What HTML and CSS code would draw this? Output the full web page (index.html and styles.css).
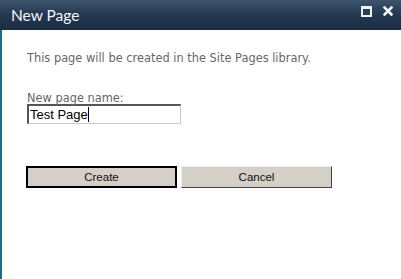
FILE: index.html
```html
<!DOCTYPE html>
<html lang="en">
<head>
    <meta charset="UTF-8">
    <title>New Page</title>
    <link rel="stylesheet" href="styles.css">
</head>
<body>
    <div class="dialog">
        <div class="dialog-title">
            <span class="title-text">New Page</span>
            <div class="title-icons">
                <span class="icon-max"></span>
                <svg class="icon-close" width="10" height="10" viewBox="0 0 10 10">
                    <path d="M1.5 1.5 L8.5 8.5 M8.5 1.5 L1.5 8.5" stroke="#f2f4f6" stroke-width="2.6" stroke-linecap="square"/>
                </svg>
            </div>
        </div>
        <div class="dialog-body">
            <p class="info">This page will be created in the Site Pages library.</p>
            <label class="field-label" for="page-name">New page name:</label>
            <div class="page-input" id="page-name">Test Page<span class="caret"></span></div>
            <div class="buttons">
                <button class="btn btn-default">Create</button>
                <button class="btn">Cancel</button>
            </div>
        </div>
    </div>
</body>
</html>
```
FILE: styles.css
```css
body {
    margin: 0;
    background-color: white;
    font-family: "DejaVu Sans", Verdana, sans-serif;
}
.dialog {
    height: 279px;
    border-left: 2px solid #1d6b86;
    box-sizing: border-box;
}
.dialog-title {
    height: 30px;
    background: linear-gradient(#3c546c, #233850 50%, #1b2c42);
    display: flex;
    align-items: center;
    justify-content: space-between;
    margin-left: -2px;
    padding: 0 8px 0 11px;
}
.title-text {
    color: #f3f5f7;
    font-family: Lato, "Liberation Sans", sans-serif;
    font-size: 15.5px;
    padding-bottom: 1px;
}
.title-icons {
    display: flex;
    align-items: center;
    gap: 11px;
    margin-bottom: 8px;
}
.icon-max {
    width: 7px;
    height: 6px;
    border: 2px solid #eef0f2;
    border-top-width: 3px;
    background-color: #2c3c50;
}
.dialog-body {
    padding: 21px 0 0 25px;
    color: #676767;
    font-size: 11.4px;
}
.info {
    margin: 0 0 27px 0;
    line-height: 14px;
}
.field-label {
    display: block;
    line-height: 12px;
}
.page-input {
    width: 150px;
    height: 17px;
    border: 1px solid #c8c8c8;
    border-top: 2px solid #555;
    border-left: 2px solid #555;
    font-family: "Liberation Sans", Arial, sans-serif;
    font-size: 13px;
    line-height: 17px;
    color: black;
    padding-left: 1px;
}
.caret {
    display: inline-block;
    width: 1px;
    height: 15px;
    background-color: black;
    vertical-align: -3px;
}
.buttons {
    display: flex;
    gap: 4px;
    margin-top: 42px;
    margin-left: -1px;
}
.btn {
    width: 151px;
    height: 22px;
    background-color: #d4d0c8;
    border: 1px solid;
    border-color: #f2f0ec #404040 #404040 #f2f0ec;
    font-family: "Liberation Sans", Tahoma, sans-serif;
    font-size: 11.5px;
    color: #111;
    padding: 0;
}
.btn-default {
    border: 2px solid black;
}
```
